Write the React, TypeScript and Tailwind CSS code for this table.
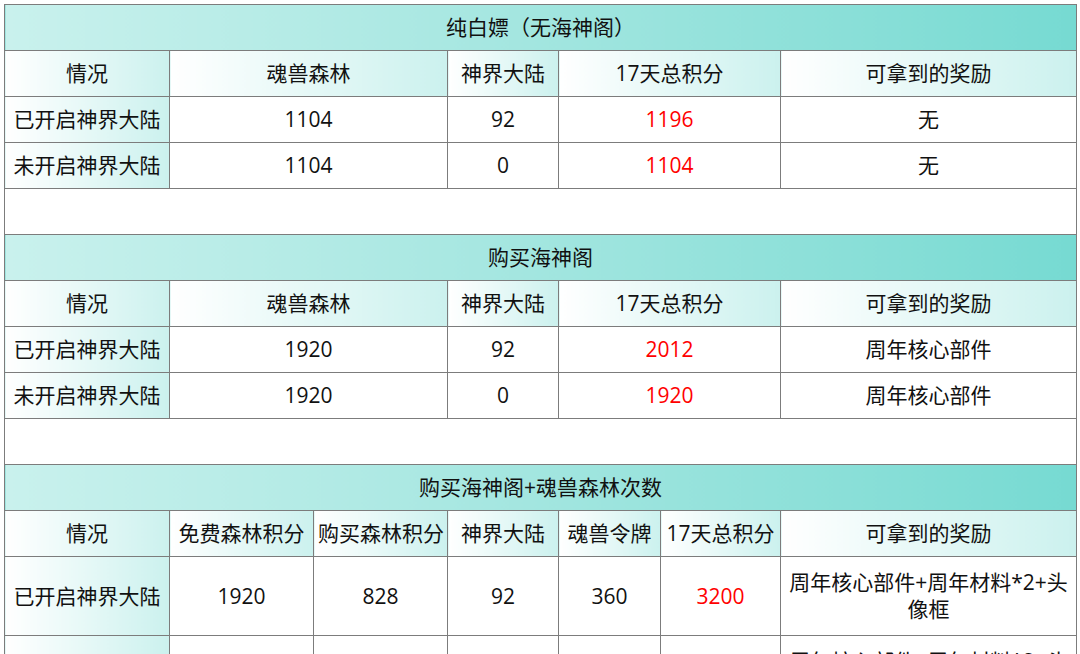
const head = "bg-gradient-to-r from-white to-[#cbf1ee]";
const cell = "border border-[#7c7c7c] text-center align-middle px-1";

type Row = {
  label: string;
  values: (string | number)[];
  total: number;
  reward: React.ReactNode;
};

const Title = ({ text }: { text: string }) => (
  <tr className="h-[46px]">
    <td colSpan={7} className={`${cell} bg-gradient-to-r from-[#c9f1ed] to-[#76dad2]`}>
      {text}
    </td>
  </tr>
);

const Spacer = () => (
  <tr className="h-[46px]">
    <td colSpan={7} className="border border-[#7c7c7c] bg-white" />
  </tr>
);

const SimpleSection = ({ title, rows }: { title: string; rows: Row[] }) => (
  <>
    <Title text={title} />
    <tr className="h-[46px]">
      <td className={`${cell} ${head}`}>情况</td>
      <td colSpan={2} className={`${cell} ${head}`}>魂兽森林</td>
      <td className={`${cell} ${head}`}>神界大陆</td>
      <td colSpan={2} className={`${cell} ${head}`}>17天总积分</td>
      <td className={`${cell} ${head}`}>可拿到的奖励</td>
    </tr>
    {rows.map((r) => (
      <tr key={r.label} className="h-[46px]">
        <td className={`${cell} ${head}`}>{r.label}</td>
        <td colSpan={2} className={cell}>{r.values[0]}</td>
        <td className={cell}>{r.values[1]}</td>
        <td colSpan={2} className={`${cell} text-[#ff0000]`}>{r.total}</td>
        <td className={cell}>{r.reward}</td>
      </tr>
    ))}
  </>
);

const fullReward = (
  <>
    周年核心部件+周年材料*2+头
    <br />
    像框
  </>
);

export default function App() {
  return (
    <div className="w-[1080px] h-[654px] overflow-hidden bg-white pt-1 pl-1">
      <table
        className="w-[1072px] border-collapse table-fixed text-[21px] leading-[27px] text-[#111111] border border-[#666666]"
        style={{ fontFamily: '"Open Sans", "Noto Sans CJK SC", sans-serif' }}
      >
        <colgroup>
          <col className="w-[165px]" />
          <col className="w-[144px]" />
          <col className="w-[134px]" />
          <col className="w-[111px]" />
          <col className="w-[102px]" />
          <col className="w-[120px]" />
          <col className="w-[296px]" />
        </colgroup>
        <tbody>
          <SimpleSection
            title="纯白嫖（无海神阁）"
            rows={[
              { label: "已开启神界大陆", values: [1104, 92], total: 1196, reward: "无" },
              { label: "未开启神界大陆", values: [1104, 0], total: 1104, reward: "无" },
            ]}
          />
          <Spacer />
          <SimpleSection
            title="购买海神阁"
            rows={[
              { label: "已开启神界大陆", values: [1920, 92], total: 2012, reward: "周年核心部件" },
              { label: "未开启神界大陆", values: [1920, 0], total: 1920, reward: "周年核心部件" },
            ]}
          />
          <Spacer />
          <Title text="购买海神阁+魂兽森林次数" />
          <tr className="h-[46px]">
            {["情况", "免费森林积分", "购买森林积分", "神界大陆", "魂兽令牌", "17天总积分", "可拿到的奖励"].map((h) => (
              <td key={h} className={`${cell} ${head} whitespace-nowrap px-0`}>
                {h}
              </td>
            ))}
          </tr>
          {[
            { label: "已开启神界大陆", v: [1920, 828, 92, 360], total: 3200 },
            { label: "未开启神界大陆", v: [1920, 828, 0, 360], total: 3108 },
          ].map((r) => (
            <tr key={r.label} className="h-[79px]">
              <td className={`${cell} ${head}`}>{r.label}</td>
              {r.v.map((x, i) => (
                <td key={i} className={cell}>{x}</td>
              ))}
              <td className={`${cell} text-[#ff0000]`}>{r.total}</td>
              <td className={cell}>{fullReward}</td>
            </tr>
          ))}
        </tbody>
      </table>
    </div>
  );
}
